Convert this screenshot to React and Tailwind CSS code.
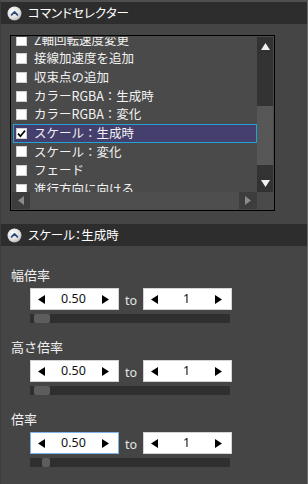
import React from "react";

const font = {
  fontFamily: '"Noto Sans CJK JP", "Noto Sans", sans-serif',
};

function CollapseIcon() {
  return (
    <svg width="15" height="15" viewBox="0 0 15 15" className="shrink-0">
      <defs>
        <radialGradient id="cg" cx="40%" cy="35%" r="70%">
          <stop offset="0%" stopColor="#ffffff" />
          <stop offset="70%" stopColor="#dcdcdc" />
          <stop offset="100%" stopColor="#a8a8a8" />
        </radialGradient>
      </defs>
      <circle cx="7.5" cy="7.5" r="7" fill="url(#cg)" />
      <polyline points="4.6,8.8 7.5,5.9 10.4,8.8" fill="none" stroke="#2b4a78" strokeWidth="1.8" strokeLinecap="round" strokeLinejoin="round" />
    </svg>
  );
}

function Header({ title }) {
  return (
    <div className="h-[22px] bg-[#2d2d2d] flex items-center pl-[6px] gap-[6px]">
      <CollapseIcon />
      <span className="text-[12.5px] leading-none text-white [font-feature-settings:'palt']">{title}</span>
    </div>
  );
}

function Tri({ dir, color = "#000", w = 8, h = 8 }) {
  const pts = {
    left: `${w},0 ${w},${h} 0,${h / 2}`,
    right: `0,0 0,${h} ${w},${h / 2}`,
    up: `0,${h} ${w},${h} ${w / 2},0`,
    down: `0,0 ${w},0 ${w / 2},${h}`,
  }[dir];
  return (
    <svg width={w} height={h} viewBox={`0 0 ${w} ${h}`} className="block">
      <polygon points={pts} fill={color} />
    </svg>
  );
}

const items = [
  "Z軸回転速度変更",
  "接線加速度を追加",
  "収束点の追加",
  "カラーRGBA：生成時",
  "カラーRGBA：変化",
  "スケール：生成時",
  "スケール：変化",
  "フェード",
  "進行方向に向ける",
];

function CheckBox({ checked }) {
  return (
    <div className="w-[11px] h-[11px] bg-white border border-[#cfcfcf] shrink-0 flex items-center justify-center">
      {checked && (
        <svg width="9" height="9" viewBox="0 0 9 9">
          <polyline points="1,4.6 3.4,7.2 8,1.6" fill="none" stroke="#000" strokeWidth="1.7" />
        </svg>
      )}
    </div>
  );
}

function ListBox() {
  return (
    <div className="ml-[9px] w-[265px] h-[176px] border border-black bg-[#4a4a4a] p-px flex flex-col">
      <div className="flex flex-1 min-h-0">
        <div className="w-[245px] overflow-hidden">
          <div className="-mt-[6.3px]">
            {items.map((t, i) => {
              const sel = i === 5;
              return (
                <div
                  key={t}
                  className={
                    "h-[18.67px] flex items-center ml-px pl-[2px] " +
                    (sel ? "bg-[#443f6c] border border-[#22a3d8]" : "border border-transparent")
                  }
                >
                  <CheckBox checked={sel} />
                  <span className="ml-[7px] text-[12.5px] leading-none text-[#f2f2f2] whitespace-nowrap">{t}</span>
                </div>
              );
            })}
          </div>
        </div>
        <div className="w-[16px] flex flex-col bg-[#333333]">
          <div className="h-[18px] flex items-center justify-center bg-[#323232]">
            <Tri dir="up" color="#f0f0f0" w={9} h={7} />
          </div>
          <div className="flex-1 flex flex-col">
            <div className="h-[51px]" />
            <div className="h-[59px] bg-[#575757]" />
            <div className="flex-1" />
          </div>
          <div className="h-[18px] flex items-center justify-center bg-[#323232]">
            <Tri dir="down" color="#f0f0f0" w={9} h={7} />
          </div>
        </div>
      </div>
      <div className="h-[17px] flex">
        <div className="w-[245px] flex bg-[#4e4e4e]">
          <div className="w-[18px] bg-[#3d3d3d] flex items-center justify-center">
            <Tri dir="left" color="#8a8a8a" w={6} h={9} />
          </div>
          <div className="flex-1" />
          <div className="w-[18px] bg-[#3d3d3d] flex items-center justify-center">
            <Tri dir="right" color="#8a8a8a" w={6} h={9} />
          </div>
        </div>
        <div className="w-[16px] bg-[#4a4a4a]" />
      </div>
    </div>
  );
}

function NumBox({ value, focused }) {
  return (
    <div
      className={
        "w-[89px] h-[22px] bg-white border flex items-center justify-between pl-[7px] pr-[9px] " +
        (focused ? "border-[#7fb2e5]" : "border-[#d4d4d4]")
      }
    >
      <Tri dir="left" color="#000" w={7} h={9} />
      <span className="text-[12.5px] leading-none text-[#111] [font-family:'Noto_Sans','Noto_Sans_CJK_JP',sans-serif]">{value}</span>
      <Tri dir="right" color="#000" w={7} h={9} />
    </div>
  );
}

function Group({ label, focused, thumbLeft, thumbW, first }) {
  return (
    <div className={first ? "" : "mt-[14px]"}>
      <div className="h-[18px] flex items-center pl-[10px] text-[13px] leading-none text-[#f0f0f0]">{label}</div>
      <div className="pl-[29px] mt-[5px]">
        <div className="flex items-center">
          <NumBox value="0.50" focused={focused} />
          <span className="w-[24px] text-center text-[12.5px] leading-none text-[#e6e6e6] pt-[4px] [font-family:'Noto_Sans',sans-serif]">to</span>
          <NumBox value="1" />
        </div>
        <div className="mt-[4px] w-[200px] h-[9px] bg-[#2f2f2f] flex">
          <div className="shrink-0" style={{ width: thumbLeft }} />
          <div className="h-[9px] bg-[#5d5d5d] rounded-[2px]" style={{ width: thumbW }} />
        </div>
      </div>
    </div>
  );
}

export default function App() {
  return (
    <div
      style={font}
      className="w-[308px] h-[484px] bg-[#454545] border-t-2 border-t-[#4f4f4f] border-r border-r-[#6a6a6a] border-l border-l-[#3c3c3c] overflow-hidden"
    >
      <Header title="コマンドセレクター" />
      <div className="pt-[11px]">
        <ListBox />
      </div>
      <div className="mt-[13px]">
        <Header title="スケール：生成時" />
      </div>
      <div className="pt-[19px]">
        <Group label="幅倍率" first thumbLeft={4} thumbW={16} />
        <Group label="高さ倍率" thumbLeft={4} thumbW={16} />
        <Group label="倍率" focused thumbLeft={12} thumbW={8} />
      </div>
    </div>
  );
}
